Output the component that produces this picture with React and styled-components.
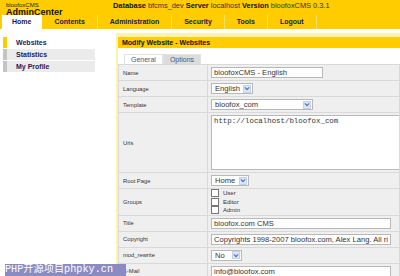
import React from 'react'
import styled, { createGlobalStyle } from 'styled-components'

const GlobalStyle = createGlobalStyle`
    html, body {
        margin: 0;
        padding: 0;
        background: #fff;
        overflow: hidden;
    }
    body {
        font-family: "Liberation Sans", Arial, sans-serif;
        color: #222;
    }
`

const tabs = ['Home', 'Contents', 'Administration', 'Security', 'Tools', 'Logout']
const menu = ['Websites', 'Statistics', 'My Profile']

const App = () => (
    <Page>
        <GlobalStyle />
        <Header>
            <TopLine>
                <Brand>
                    <BrandSmall>bloofoxCMS</BrandSmall>
                    <BrandBig>AdminCenter</BrandBig>
                </Brand>
                <Info>
                    <b>Database</b> bfcms_dev <b>Server</b> localhost <b>Version</b> bloofoxCMS 0.3.1
                </Info>
            </TopLine>
            <TabBar>
                { tabs.map((t, i) => (
                    <Tab key={ t } active={ i === 0 }>{ t }</Tab>
                )) }
            </TabBar>
        </Header>
        <Body>
            <Sidebar>
                { menu.map((m, i) => (
                    <MenuItem key={ m } active={ i === 0 }>{ m }</MenuItem>
                )) }
            </Sidebar>
            <Main>
                <PanelTitle>Modify Website - Websites</PanelTitle>
                <FormTabs>
                    <FormTab>General</FormTab>
                    <FormTab active>Options</FormTab>
                </FormTabs>
                <Form>
                    <tbody>
                    <tr>
                        <Label>Name</Label>
                        <Cell><Input width={ 112 } value="bloofoxCMS - English" readOnly /></Cell>
                    </tr>
                    <tr>
                        <Label>Language</Label>
                        <Cell><Select width={ 42 }>English</Select></Cell>
                    </tr>
                    <tr>
                        <Label>Template</Label>
                        <Cell><Select width={ 102 }>bloofox_com</Select></Cell>
                    </tr>
                    <tr>
                        <Label>Urls</Label>
                        <Cell><TextArea value="http://localhost/bloofox_com" readOnly /></Cell>
                    </tr>
                    <tr>
                        <Label>Root Page</Label>
                        <Cell><Select width={ 38 }>Home</Select></Cell>
                    </tr>
                    <tr>
                        <Label>Groups</Label>
                        <Cell tight>
                            { ['User', 'Editor', 'Admin'].map(g => (
                                <Check key={ g }><Box />{ g }</Check>
                            )) }
                        </Cell>
                    </tr>
                    <tr>
                        <Label>Title</Label>
                        <Cell><Input width={ 180 } value="bloofox.com CMS" readOnly /></Cell>
                    </tr>
                    <tr>
                        <Label>Copyright</Label>
                        <Cell><Input width={ 180 } value="Copyrights 1998-2007 bloofox.com, Alex Lang. All rights reserved." readOnly /></Cell>
                    </tr>
                    <tr>
                        <Label>mod_rewrite</Label>
                        <Cell><Select width={ 31 }>No</Select></Cell>
                    </tr>
                    <tr>
                        <Label>E-Mail</Label>
                        <Cell><Input width={ 180 } value="info@bloofox.com" readOnly /></Cell>
                    </tr>
                    </tbody>
                </Form>
            </Main>
        </Body>
        <Watermark>PHP开源项目phpky.cn</Watermark>
    </Page>
)

const Select = ({ width, children }) => (
    <SelectBox style={ { width } }>
        <span>{ children }</span>
        <Arrow>
            <svg width="7" height="7" viewBox="0 0 7 7">
                <path d="M1 2.2 L3.5 4.8 L6 2.2" fill="none" stroke="#4a6fc7" strokeWidth="1.4" />
            </svg>
        </Arrow>
    </SelectBox>
)

const Page = styled.div`
    position: relative;
    width: 400px;
    height: 276px;
    overflow: hidden;
`

const Header = styled.div`
    background: #ffcc00;
    height: 29px;
    display: flex;
    flex-direction: column;
`

const TopLine = styled.div`
    display: flex;
    height: 15px;
`

const Brand = styled.div`
    width: 107px;
    padding-left: 6px;
    display: flex;
    flex-direction: column;
`

const BrandSmall = styled.div`
    font-size: 6px;
    line-height: 6px;
    margin-top: 2px;
`

const BrandBig = styled.div`
    font-size: 9px;
    font-weight: bold;
    line-height: 8px;
    color: #111;
`

const Info = styled.div`
    font-size: 7.4px;
    line-height: 9px;
    padding-top: 1px;
    color: #333;
    white-space: nowrap;
    b { color: #111; }
`

const TabBar = styled.div`
    display: flex;
    padding-left: 2px;
    height: 14px;
`

const Tab = styled.div`
    padding: 0 ${({ active }) => active ? 10 : 12}px;
    font-size: 7px;
    font-weight: bold;
    line-height: 14px;
    color: #1a1a4a;
    background: ${({ active }) => active ? '#fff' : 'transparent'};
    border-right: 1px solid ${({ active }) => active ? '#fff' : '#ffe066'};
`

const Body = styled.div`
    display: flex;
    padding-top: 4px;
`

const Sidebar = styled.div`
    width: 96px;
    padding: 4px 21px 0 3px;
    display: flex;
    flex-direction: column;
`

const MenuItem = styled.div`
    height: 11px;
    line-height: 11px;
    margin-bottom: 1px;
    padding-left: 9px;
    font-size: 7px;
    font-weight: bold;
    color: #1c1c5c;
    background: ${({ active }) => active ? '#fff' : '#ebebeb'};
    border-left: 4px solid ${({ active }) => active ? '#ffcc00' : '#c4c4c4'};
`

const Main = styled.div`
    flex: 1;
    border-top: 4px solid #fff2b0;
    border-left: 2px solid #fff2b0;
    height: 260px;
`

const PanelTitle = styled.div`
    background: #ffcc00;
    height: 11px;
    line-height: 11px;
    padding-left: 4px;
    font-size: 7px;
    font-weight: bold;
    color: #111;
`

const FormTabs = styled.div`
    display: flex;
    padding: 6px 0 0 6px;
    height: 10px;
`

const FormTab = styled.div`
    padding: 0 6px;
    font-size: 7px;
    line-height: 10px;
    color: #4a5a7a;
    background: ${({ active }) => active ? '#dcdcdc' : '#fff'};
    border: 1px solid #e2e2e2;
    border-bottom: none;
`

const Form = styled.table`
    border-collapse: collapse;
    width: 282px;
    table-layout: fixed;
`

const Label = styled.td`
    width: 84px;
    padding: 0 0 0 4px;
    font-size: 5.8px;
    color: #333;
    background: #efefef;
    border: 1px solid #d9d9d9;
`

const Cell = styled.td`
    padding: ${({ tight }) => tight ? '0 3px' : '2px 3px'};
    height: 11px;
    background: #efefef;
    border: 1px solid #d9d9d9;
    font-size: 7.5px;
`

const Input = styled.input`
    display: block;
    box-sizing: border-box;
    width: ${({ width }) => width}px;
    height: 11px;
    padding: 0 2px;
    border: 1px solid #b8b8b8;
    background: #fff;
    font-family: "Liberation Sans", Arial, sans-serif;
    font-size: 7.6px;
    color: #333;
    outline: none;
`

const SelectBox = styled.div`
    box-sizing: border-box;
    height: 11px;
    display: flex;
    align-items: center;
    justify-content: space-between;
    padding: 0 1px 0 3px;
    border: 1px solid #b8b8b8;
    background: #fff;
    font-size: 7.6px;
    color: #333;
`

const Arrow = styled.span`
    display: flex;
    align-items: center;
    justify-content: center;
    width: 8px;
    height: 8px;
    background: #dde6f7;
    border: 1px solid #c4d0ec;
    box-sizing: border-box;
`

const TextArea = styled.textarea`
    display: block;
    box-sizing: border-box;
    width: 190px;
    height: 55px;
    padding: 1px 2px;
    border: 1px solid #b8b8b8;
    resize: none;
    font-family: "Liberation Mono", "Courier New", monospace;
    font-size: 7.4px;
    color: #333;
    outline: none;
`

const Check = styled.div`
    display: flex;
    align-items: center;
    gap: 4px;
    height: 8.5px;
    font-size: 6px;
    color: #333;
`

const Box = styled.span`
    width: 6px;
    height: 6px;
    border: 1px solid #777;
    background: #fff;
`

const Watermark = styled.div`
    position: absolute;
    left: 5px;
    bottom: 0;
    width: 121px;
    height: 12px;
    background: #8b8bc4;
    color: #fff;
    font-family: "Liberation Mono", "Noto Sans CJK SC", monospace;
    font-size: 10.2px;
    line-height: 12px;
    white-space: nowrap;
    overflow: hidden;
`

export default App
